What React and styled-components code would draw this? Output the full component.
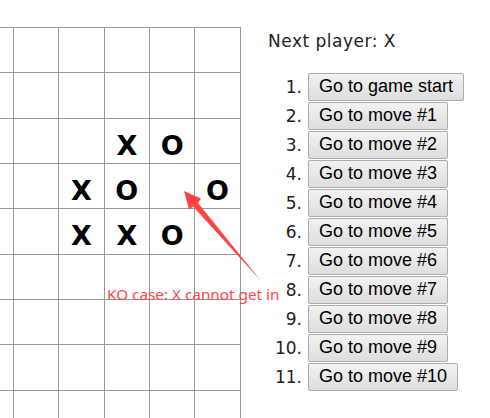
import React from "react";
import styled, { createGlobalStyle } from "styled-components";

const COLS = 6;
const ROWS = 9;

// board cells that hold a stone, keyed by "row-col"
const stones = {
  "2-3": "X",
  "2-4": "O",
  "3-2": "X",
  "3-3": "O",
  "3-5": "O",
  "4-2": "X",
  "4-3": "X",
  "4-4": "O",
};

const moves = [
  "Go to game start",
  "Go to move #1",
  "Go to move #2",
  "Go to move #3",
  "Go to move #4",
  "Go to move #5",
  "Go to move #6",
  "Go to move #7",
  "Go to move #8",
  "Go to move #9",
  "Go to move #10",
];

const App = () => {
  const cells = [];
  for (let r = 0; r < ROWS; r++) {
    for (let c = 0; c < COLS; c++) {
      cells.push(<Square key={`${r}-${c}`}>{stones[`${r}-${c}`] || ""}</Square>);
    }
  }

  return (
    <Game>
      <GlobalStyle />
      <BoardArea>
        <Board>{cells}</Board>
      </BoardArea>
      <GameInfo>
        <Status>Next player: X</Status>
        <MoveList>
          {moves.map((label, i) => (
            <Move key={label}>
              <MoveNumber>{i + 1}.</MoveNumber>
              <MoveButton>{label}</MoveButton>
            </Move>
          ))}
        </MoveList>
      </GameInfo>
      <Annotation>
        <svg width='280' height='300' viewBox='0 0 280 300'>
          <polygon
            points='184,191 201,198.5 198,203 261,281 193,206.5 189,209.5'
            fill='#ff4444'
          />
        </svg>
        <Note>KO case: X cannot get in</Note>
      </Annotation>
    </Game>
  );
};

const GlobalStyle = createGlobalStyle`
  html, body {
    margin: 0;
    padding: 0;
    background: #fff;
  }
  body {
    font-family: "DejaVu Sans", sans-serif;
  }
`;

const Game = styled.div`
  position: relative;
  display: flex;
  flex-direction: row;
  height: 100vh;
  overflow: hidden;
`;

const BoardArea = styled.div`
  width: 241px;
  flex-shrink: 0;
  padding-top: 27px;
  overflow: hidden;
`;

const Board = styled.div`
  display: grid;
  grid-template-columns: repeat(${COLS}, 45.33px);
  grid-auto-rows: 45.33px;
  width: max-content;
  margin-left: -32.33px;
  border-top: 1px solid #999;
  border-left: 1px solid #999;
`;

const Square = styled.div`
  box-sizing: border-box;
  border-right: 1px solid #999;
  border-bottom: 1px solid #999;
  text-align: center;
  font-family: "DejaVu Sans", Verdana, sans-serif;
  font-weight: bold;
  font-size: 27px;
  line-height: 54px;
  color: #000;
`;

const GameInfo = styled.div`
  margin-left: 27px;
  padding-top: 30px;
`;

const Status = styled.div`
  font-size: 17px;
  letter-spacing: 0.5px;
  line-height: 22px;
  color: #222;
`;

const MoveList = styled.ol`
  list-style: none;
  margin: 20px 0 0;
  padding: 0;
`;

const Move = styled.li`
  display: flex;
  align-items: center;
  height: 29px;
`;

const MoveNumber = styled.span`
  width: 34px;
  margin-right: 6px;
  text-align: right;
  font-size: 17px;
  line-height: 28px;
  color: #222;
`;

const MoveButton = styled.button`
  box-sizing: border-box;
  height: 28px;
  padding: 0 10px;
  border: 1px solid #acacac;
  border-radius: 2px;
  background: linear-gradient(#f2f2f2, #dddddd);
  font-family: "Liberation Sans", Arial, sans-serif;
  font-size: 18px;
  color: #000;
  white-space: nowrap;
  cursor: pointer;
`;

const Annotation = styled.div`
  position: absolute;
  left: 0;
  top: 0;
  width: 280px;
  height: 300px;
  pointer-events: none;

  svg {
    display: block;
  }
`;

const Note = styled.span`
  position: absolute;
  left: 107px;
  top: 284px;
  font-family: "Noto Sans", sans-serif;
  font-size: 15.3px;
  line-height: 20px;
  color: #ff4444;
  white-space: nowrap;
`;

export default App;
